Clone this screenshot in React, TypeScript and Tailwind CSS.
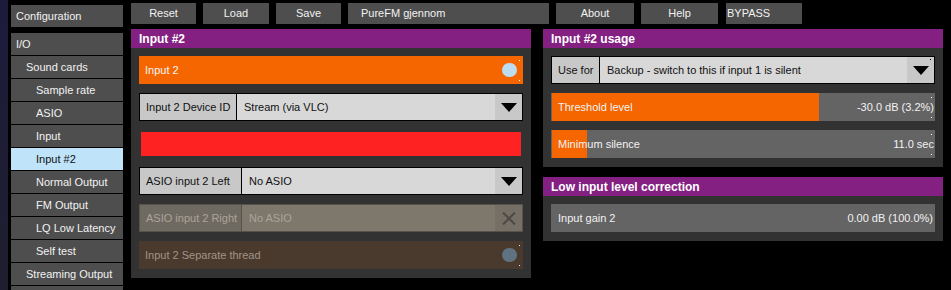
const sideItems: { label: string; level: number; active?: boolean }[] = [
  { label: 'I/O', level: 0 },
  { label: 'Sound cards', level: 1 },
  { label: 'Sample rate', level: 2 },
  { label: 'ASIO', level: 2 },
  { label: 'Input', level: 2 },
  { label: 'Input #2', level: 2, active: true },
  { label: 'Normal Output', level: 2 },
  { label: 'FM Output', level: 2 },
  { label: 'LQ Low Latency', level: 2 },
  { label: 'Self test', level: 2 },
  { label: 'Streaming Output', level: 1 },
  { label: '', level: 1 },
];

const indent = ['pl-[5px]', 'pl-[15px]', 'pl-[25px]'];

function SideItem({ label, level, active }: { label: string; level: number; active?: boolean }) {
  return (
    <div
      className={`h-[22px] shrink-0 flex items-center ${indent[level]} ${
        active ? 'bg-[#bfe3f8] text-[#111]' : 'bg-[#4e4e4e] text-[#f2f2f2]'
      }`}
    >
      {label}
    </div>
  );
}

function TopButton({ label, w, left }: { label: string; w: string; left?: string }) {
  return (
    <div className={`${w} h-[21px] bg-[#4e4e4e] text-[#f2f2f2] flex items-center ${left ?? 'justify-center'}`}>
      {label}
    </div>
  );
}

function Dots({ light = '#ffffff' }: { light?: string }) {
  return (
    <>
      <span className="absolute right-[3px] top-[4px] w-[1px] h-[1px]" style={{ background: light }} />
      <span className="absolute right-[3px] bottom-[3px] w-[1px] h-[1px]" style={{ background: light }} />
    </>
  );
}

function Arrow() {
  return (
    <svg width="16" height="9" viewBox="0 0 16 9">
      <polygon points="0,0 16,0 8,9" fill="#000" />
    </svg>
  );
}

function Select({ label, value, labelW }: { label: string; value: string; labelW: string }) {
  return (
    <div className="relative h-[28px] flex border border-black bg-[#d8d8d8] text-[#111]">
      <div className={`${labelW} shrink-0 bg-[#c8c8c8] border-r border-black pl-[6px] flex items-center`}>{label}</div>
      <div className="flex-1 pl-[7px] flex items-center">{value}</div>
      <div className="w-[27px] bg-[#c8c8c8] flex items-center justify-center pt-[1px]">
        <Arrow />
      </div>
    </div>
  );
}

function DisabledSelect({ label, value, labelW }: { label: string; value: string; labelW: string }) {
  return (
    <div className="h-[28px] flex border border-[#57524b] bg-[#7e776c] text-[#aaa49a]">
      <div className={`${labelW} shrink-0 bg-[#6f6a61] border-r border-[#57524b] pl-[6px] flex items-center`}>{label}</div>
      <div className="flex-1 pl-[7px] flex items-center">{value}</div>
      <div className="w-[27px] bg-[#756f66] flex items-center justify-center">
        <svg width="14" height="13" viewBox="0 0 14 13">
          <path d="M1 0.5 L13 12.5 M13 0.5 L1 12.5" stroke="#4c4945" strokeWidth="2" />
        </svg>
      </div>
    </div>
  );
}

function Slider({ label, value, fill }: { label: string; value: string; fill: string }) {
  return (
    <div className="relative h-[28px] bg-[#646464] text-[#f2f2f2] flex items-center justify-between pl-[7px] pr-[1px]">
      <div className={`absolute left-[1px] top-0 bottom-0 ${fill} bg-[#f56600]`} />
      <span className="relative">{label}</span>
      <span className="relative">{value}</span>
      <Dots />
    </div>
  );
}

function Panel({ title, children }: { title: string; children: React.ReactNode }) {
  return (
    <div className="w-[400px] bg-[#323232]">
      <div className="h-[19px] bg-[#832082] text-white font-bold text-[12px] flex items-center pl-[8px]">{title}</div>
      <div className="px-[8px] pt-[8px] pb-[9px] flex flex-col gap-[9px]">{children}</div>
    </div>
  );
}

export default function App() {
  return (
    <div className="w-[951px] h-[290px] bg-black flex overflow-hidden text-[11px] font-['Liberation_Sans',Arial,sans-serif]">
      <div className="w-[8px] shrink-0 bg-gradient-to-b from-[#1c1b3c] to-[#1f1e2e]" />
      <div className="flex-1 flex flex-col">
        <div className="h-[2px] bg-[#e6e6e6]" />
        <div className="flex pl-[3px] gap-[8px]">
          {/* Sidebar */}
          <nav className="w-[112px] pt-[5px] flex flex-col gap-[1px]">
            <SideItem label="Configuration" level={0} />
            <div className="h-[4px] shrink-0" />
            {sideItems.map((it, i) => (
              <SideItem key={i} {...it} />
            ))}
          </nav>

          <div className="flex flex-col pt-[3px]">
            {/* Toolbar */}
            <div className="flex gap-[7px]">
              <TopButton label="Reset" w="w-[65px]" />
              <TopButton label="Load" w="w-[66px]" />
              <TopButton label="Save" w="w-[65px]" />
              <TopButton label="PureFM gjennom" w="w-[201px]" left="pl-[13px]" />
              <TopButton label="About" w="w-[78px]" />
              <TopButton label="Help" w="w-[77px]" />
              <TopButton label="BYPASS" w="w-[76px] ml-[1px]" left="pl-[1px]" />
            </div>

            {/* Panels */}
            <div className="mt-[5px] flex gap-[12px] items-start">
              <Panel title="Input #2">
                <div className="relative h-[28px] bg-[#f56600] text-[#f6f6f6] flex items-center justify-between pl-[6px] pr-[6px]">
                  <span>Input 2</span>
                  <span className="w-[15px] h-[14px] rounded-full bg-[#bcdcf2]" />
                  <Dots />
                </div>
                <Select label="Input 2 Device ID" value="Stream (via VLC)" labelW="w-[97px]" />
                <div className="h-[28px] p-[2px]">
                  <div className="h-full bg-[#ff2222]" />
                </div>
                <Select label="ASIO input 2 Left" value="No ASIO" labelW="w-[102px]" />
                <DisabledSelect label="ASIO input 2 Right" value="No ASIO" labelW="w-[102px]" />
                <div className="relative h-[28px] bg-[#4a3a2d] text-[#a09487] flex items-center justify-between pl-[6px] pr-[6px]">
                  <span>Input 2 Separate thread</span>
                  <span className="w-[15px] h-[14px] rounded-full bg-[#5e7282]" />
                  <Dots light="#e8e8e8" />
                </div>
              </Panel>

              <div className="flex flex-col gap-[10px]">
                <Panel title="Input #2 usage">
                  <div className="relative">
                    <Select label="Use for" value="Backup - switch to this if input 1 is silent" labelW="w-[48px]" />
                    <span className="absolute right-[4px] top-[3px] w-[1px] h-[1px] bg-black" />
                  </div>
                  <Slider label="Threshold level" value="-30.0 dB (3.2%)" fill="w-[267px]" />
                  <Slider label="Minimum silence" value="11.0 sec" fill="w-[35px]" />
                </Panel>
                <Panel title="Low input level correction">
                  <div className="h-[28px] bg-[#646464] text-[#f2f2f2] flex items-center justify-between pl-[7px] pr-[2px]">
                    <span>Input gain 2</span>
                    <span>0.00 dB (100.0%)</span>
                  </div>
                </Panel>
              </div>
            </div>
          </div>
        </div>
      </div>
    </div>
  );
}
